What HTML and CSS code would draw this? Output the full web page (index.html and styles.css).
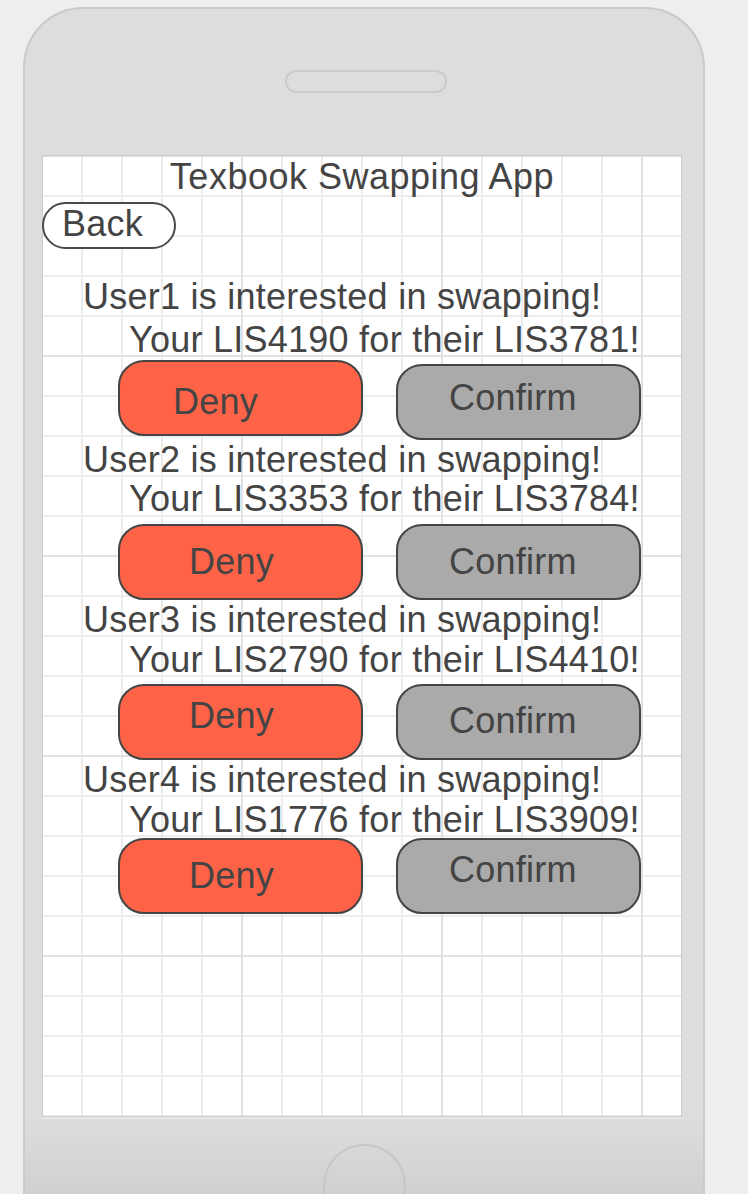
FILE: index.html
```html
<!DOCTYPE html>
<html lang="en">
<head>
<meta charset="utf-8">
<title>Texbook Swapping App</title>
<link rel="stylesheet" href="styles.css">
</head>
<body>
<div class="phone">
  <div class="speaker"></div>
  <div class="screen">
    <div class="title">Texbook Swapping App</div>
    <div class="back">Back</div>

    <div class="swap swap--1">
      <div class="who">User1 is interested in swapping!</div>
      <div class="offer">Your LIS4190 for their LIS3781!</div>
      <div class="actions">
        <div class="btn btn--deny deny-1">Deny</div>
        <div class="btn btn--confirm confirm-1">Confirm</div>
      </div>
    </div>

    <div class="swap swap--2">
      <div class="who">User2 is interested in swapping!</div>
      <div class="offer">Your LIS3353 for their LIS3784!</div>
      <div class="actions">
        <div class="btn btn--deny deny-2">Deny</div>
        <div class="btn btn--confirm confirm-2">Confirm</div>
      </div>
    </div>

    <div class="swap swap--3">
      <div class="who">User3 is interested in swapping!</div>
      <div class="offer">Your LIS2790 for their LIS4410!</div>
      <div class="actions">
        <div class="btn btn--deny deny-3">Deny</div>
        <div class="btn btn--confirm confirm-3">Confirm</div>
      </div>
    </div>

    <div class="swap swap--4">
      <div class="who">User4 is interested in swapping!</div>
      <div class="offer">Your LIS1776 for their LIS3909!</div>
      <div class="actions">
        <div class="btn btn--deny deny-4">Deny</div>
        <div class="btn btn--confirm confirm-4">Confirm</div>
      </div>
    </div>
  </div>
  <div class="home"></div>
</div>
</body>
</html>
```
FILE: styles.css
```css
html, body {
  margin: 0;
  padding: 0;
}
body {
  width: 748px;
  height: 1194px;
  overflow: hidden;
  background: #eeeeee;
  font-family: "Liberation Sans", Arial, sans-serif;
  color: #444444;
}
.phone {
  box-sizing: border-box;
  margin: 7px 0 0 23px;
  width: 682px;
  height: 1187px;
  overflow: hidden;
  border: 2px solid #cacaca;
  border-bottom: 0;
  border-radius: 60px 60px 0 0;
  background: linear-gradient(to bottom, #dddddd 0, #dddddd 1108px, #d0d0d0 1187px);
  padding-top: 61px;
}
.speaker {
  box-sizing: border-box;
  margin-left: 260px;
  width: 162px;
  height: 23px;
  border: 2px solid #cacaca;
  border-radius: 12px;
}
.screen {
  box-sizing: border-box;
  margin: 62px 0 0 17px;
  width: 640px;
  height: 962px;
  border: 1px solid #cdcdcd;
  box-shadow: 0 2px 0 #e6e6e6;
  background-color: #ffffff;
  background-image:
    linear-gradient(to right, #e1e1e1 2px, transparent 2px),
    linear-gradient(to bottom, #e1e1e1 2px, transparent 2px),
    linear-gradient(to right, #ececec 2px, transparent 2px),
    linear-gradient(to bottom, #ececec 2px, transparent 2px);
  background-size: 200px 200px, 200px 200px, 40px 40px, 40px 40px;
  background-position: 198px 0, 0 199px, 38px 0, 0 39px;
  font-size: 36px;
  line-height: 40px;
  letter-spacing: 0.25px;
}
.title {
  margin-top: 1px;
  text-align: center;
  letter-spacing: 0.5px;
}
.back {
  box-sizing: border-box;
  margin-top: 5px;
  margin-left: -1px;
  width: 134px;
  height: 47px;
  border: 2px solid #4a4a4a;
  border-radius: 24px;
  background: #ffffff;
  padding-left: 18px;
}
.who {
  padding-left: 40px;
}
.offer {
  padding-left: 86px;
}
.actions {
  display: flex;
  align-items: flex-start;
  gap: 33px;
  margin-left: 75px;
}
.btn {
  box-sizing: border-box;
  width: 245px;
  height: 76px;
  border: 2px solid #444444;
  border-radius: 26px;
}
.btn--deny {
  background: #ff6347;
  padding-left: 69px;
}
.btn--confirm {
  background: #aaaaaa;
  padding-left: 51px;
}

/* per-row placement, as drawn in the mockup */
.swap--1 .who { margin-top: 28px; }
.swap--1 .offer { margin-top: 3px; }
.swap--2 .offer { margin-top: -1px; }
.swap--2 .actions { margin-top: 5px; }
.swap--3 .actions { margin-top: 4px; }
.swap--4 .actions { margin-top: -2px; }

.deny-1 { padding-left: 53px; padding-top: 20px; }
.confirm-1 { margin-top: 4px; padding-top: 12px; }
.deny-2 { padding-top: 16px; }
.confirm-2 { padding-top: 16px; }
.deny-3 { padding-top: 10px; }
.confirm-3 { padding-top: 15px; }
.deny-4 { padding-top: 16px; }
.confirm-4 { padding-top: 10px; }

.home {
  box-sizing: border-box;
  margin: 27px auto 0;
  width: 83px;
  height: 83px;
  border: 2px solid #c6c6c6;
  border-radius: 50%;
}
```
